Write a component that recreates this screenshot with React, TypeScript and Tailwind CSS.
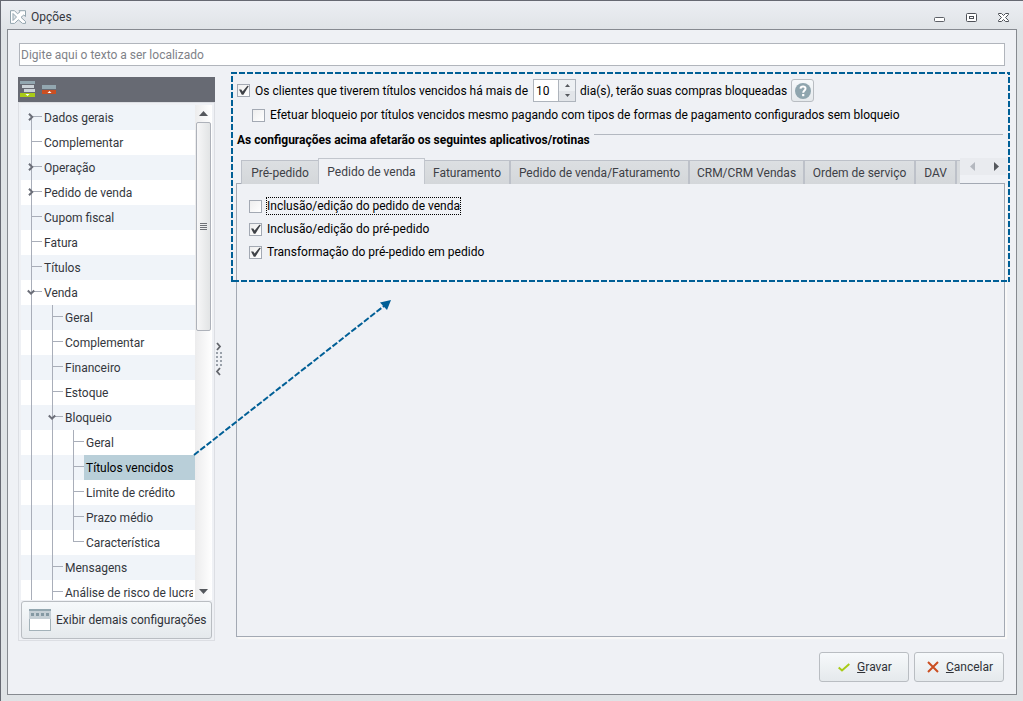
import { useState } from 'react';
import clsx from 'clsx';

type TreeRow = { id: string; label: string; depth: number; open?: boolean; last?: boolean };

const rows: TreeRow[] = [
  { id: 'dados', label: 'Dados gerais', depth: 0, open: false },
  { id: 'compl', label: 'Complementar', depth: 0 },
  { id: 'oper', label: 'Operação', depth: 0, open: false },
  { id: 'pedido', label: 'Pedido de venda', depth: 0, open: false },
  { id: 'cupom', label: 'Cupom fiscal', depth: 0 },
  { id: 'fatura', label: 'Fatura', depth: 0 },
  { id: 'titulos', label: 'Títulos', depth: 0 },
  { id: 'venda', label: 'Venda', depth: 0, open: true },
  { id: 'v-geral', label: 'Geral', depth: 1 },
  { id: 'v-compl', label: 'Complementar', depth: 1 },
  { id: 'v-fin', label: 'Financeiro', depth: 1 },
  { id: 'v-est', label: 'Estoque', depth: 1 },
  { id: 'v-bloq', label: 'Bloqueio', depth: 1, open: true },
  { id: 'b-geral', label: 'Geral', depth: 2 },
  { id: 'b-venc', label: 'Títulos vencidos', depth: 2 },
  { id: 'b-lim', label: 'Limite de crédito', depth: 2 },
  { id: 'b-prazo', label: 'Prazo médio', depth: 2 },
  { id: 'b-carac', label: 'Característica', depth: 2, last: true },
  { id: 'v-msg', label: 'Mensagens', depth: 1 },
  { id: 'v-risco', label: 'Análise de risco de lucrat', depth: 1 },
];

const tabs = [
  { name: 'Pré-pedido', width: 'w-[77px]' },
  { name: 'Pedido de venda', width: 'w-[107px]' },
  { name: 'Faturamento', width: 'w-[86px]' },
  { name: 'Pedido de venda/Faturamento', width: 'w-[179px]' },
  { name: 'CRM/CRM Vendas', width: 'w-[115px]' },
  { name: 'Ordem de serviço', width: 'w-[111px]' },
  { name: 'DAV', width: 'w-[41px]' },
];

function CheckBox({ label, defaultChecked, focused }: { label: string; defaultChecked?: boolean; focused?: boolean }) {
  return (
    <label className="flex items-center gap-[4px] whitespace-nowrap text-black">
      <span className="relative size-[13px] shrink-0">
        <input
          type="checkbox"
          defaultChecked={defaultChecked}
          className="peer block size-[13px] appearance-none border border-[#a3a9b3] bg-linear-to-br from-[#eeeeee] to-white outline-none"
        />
        <svg viewBox="0 0 13 13" className="pointer-events-none absolute inset-0 hidden size-[13px] peer-checked:block">
          <path d="M2 5.5 H4.3 L5.6 7.6 L10.4 1.8 L11.8 2 L6.4 10.8 H4.800Z" fill="#3f4247" />
        </svg>
      </span>
      <span className={clsx('border border-dotted leading-[16px]', focused ? 'border-black' : 'border-transparent')}>
        {label}
      </span>
    </label>
  );
}

function TreeItem({ row, index, selected, onSelect }: { row: TreeRow; index: number; selected: boolean; onSelect: () => void }) {
  return (
    <li role="treeitem" aria-selected={selected} className={index % 2 ? 'bg-white' : 'bg-[#f0f4f9]'}>
      <button type="button" onClick={onSelect} className="flex h-[25px] w-full items-stretch pl-[10px] text-left">
        {Array.from({ length: row.depth }, (_, i) => (
          <span key={i} className="w-[21px] shrink-0 border-l border-[#a9aeb9]" />
        ))}
        <span className="relative flex w-[11px] shrink-0 flex-col">
          <span className={clsx('h-[12px] border-b border-b-[#a9aeb9]', index > 0 && 'border-l border-l-[#a9aeb9]')} />
          <span className={clsx('flex-1', !row.last && 'border-l border-[#a9aeb9]')} />
          {row.open !== undefined && (
            <svg viewBox="0 0 8 8" className="absolute -left-[4px] top-[8px] size-[8px]">
              <path
                d={row.open ? 'M0.8 2.5 L4 5.7 L7.2 2.5' : 'M2 0.8 L5.2 4 L2 7.2'}
                fill="none"
                stroke="#6b6e78"
                strokeWidth="2"
              />
            </svg>
          )}
        </span>
        <span
          className={clsx(
            'flex-1 overflow-hidden whitespace-nowrap pl-[2px] leading-[27px]',
            selected ? 'bg-[#b9cfd9] text-black' : 'mr-[2px] text-[#34373d]'
          )}
        >
          {row.label}
        </span>
      </button>
    </li>
  );
}

function ScrollBar() {
  return (
    <div className="flex w-[17px] shrink-0 flex-col items-center bg-linear-to-r from-[#ececed] to-white">
      <button type="button" aria-label="Rolar para cima" className="flex h-[17px] w-full items-center justify-center">
        <svg viewBox="0 0 9 5" className="h-[5px] w-[9px]"><path d="M0 5 L4.500 0 L9 5Z" fill="#55585d" /></svg>
      </button>
      <div className="flex h-[209px] w-[15px] flex-col items-center justify-center gap-px rounded-[2px] border border-[#aeb2ba] bg-linear-to-r from-[#f7f7f8] to-[#e2e4e5]">
        <span className="h-px w-[7px] bg-[#6e7176]" />
        <span className="h-px w-[7px] bg-[#6e7176]" />
        <span className="h-px w-[7px] bg-[#6e7176]" />
        <span className="h-px w-[7px] bg-[#6e7176]" />
      </div>
      <button type="button" aria-label="Rolar para baixo" className="mt-auto flex h-[17px] w-full items-center justify-center">
        <svg viewBox="0 0 9 5" className="h-[5px] w-[9px]"><path d="M0 0 L4.500 5 L9 0Z" fill="#55585d" /></svg>
      </button>
    </div>
  );
}

function Sidebar() {
  const [selected, setSelected] = useState('b-venc');

  return (
    <aside className="mt-[5px] flex w-[197px] shrink-0 flex-col">
      <div className="flex h-[25px] shrink-0 items-start gap-[7px] bg-[#676a73] pl-[2px] pt-[4px]">
        <button type="button" aria-label="Expandir tudo">
          <svg viewBox="0 0 15 16" className="h-[16px] w-[15px]">
            <rect width="15" height="3" fill="#93a7b0" />
            <rect x="2" y="4" width="12" height="3" fill="#ccd3d8" />
            <rect x="4" y="8" width="11" height="3" fill="#ccd3d8" />
            <rect y="12" width="15" height="4" fill="#a8cb17" />
            <path d="M5.500 13 H9.500 L7.500 15Z" fill="#fff" />
          </svg>
        </button>
        <button type="button" aria-label="Recolher tudo">
          <svg viewBox="0 0 14 16" className="h-[16px] w-[14px]">
            <rect y="4" width="14" height="4" fill="#93a7b0" />
            <rect y="9" width="14" height="4" fill="#cb4f22" />
            <path d="M5.500 12 H9.500 L7.500 10Z" fill="#fff" />
          </svg>
        </button>
      </div>
      <div className="flex min-h-0 flex-1 flex-col border border-[#dcdee3] p-[2px] pb-px">
        <div className="flex min-h-0 flex-1">
          <ul role="tree" aria-label="Configurações" className="min-w-0 flex-1 overflow-hidden">
            {rows.map((row, i) => (
              <TreeItem key={row.id} row={row} index={i} selected={row.id === selected} onSelect={() => setSelected(row.id)} />
            ))}
          </ul>
          <ScrollBar />
        </div>
        <button
          type="button"
          className="mt-px flex h-[38px] shrink-0 items-center gap-[5px] whitespace-nowrap rounded-[3px] border border-[#b9bdc2] bg-linear-to-b from-[#f6f9fb] to-[#e5e9ec] pl-[7px] text-[#2f3238]"
        >
          <svg viewBox="0 0 22 22" className="size-[22px] shrink-0">
            <rect x="0.500" y="0.500" width="21" height="21" fill="#fff" stroke="#a3b2b9" />
            <rect width="22" height="10" fill="#c5cfd5" />
            <rect width="22" height="2" fill="#93a7b0" />
            {[2, 7, 12, 17].map((x) => (
              <rect key={x} x={x} y="4" width="3" height="3" fill="#8499a3" />
            ))}
          </svg>
          Exibir demais configurações
        </button>
      </div>
    </aside>
  );
}

function Splitter() {
  return (
    <div role="separator" className="flex w-[16px] shrink-0 justify-start pt-[270px]">
      <svg viewBox="0 0 8 34" className="h-[34px] w-[8px]">
        <path d="M2 1 L5 4.500 L2 8 M5 26 L2 29.500 L5 33" fill="none" stroke="#63666c" strokeWidth="1.8" />
        {[10, 14, 18, 22].map((y) => (
          <path key={y} d={`M1 ${y} h2 v2 h-2z M5 ${y} h2 v2 h-2z`} fill="#9aa1aa" />
        ))}
      </svg>
    </div>
  );
}

function Settings() {
  const [active, setActive] = useState('Pedido de venda');

  return (
    <section className="relative mb-[4px] mr-[6px] flex min-w-0 flex-1 flex-col pl-[5px] pr-[5px] pt-[7px]">
      <div className="flex h-[23px] items-center pl-px text-black">
        <CheckBox label="Os clientes que tiverem títulos vencidos há mais de" defaultChecked />
        <span className="ml-[4px] flex h-[23px] w-[43px] border border-[#aeb4bc] bg-white">
          <input aria-label="Dias de atraso" defaultValue="10" className="w-[24px] min-w-0 pl-[2px] outline-none" />
          <span className="flex flex-1 flex-col border-l border-[#aeb4bc] bg-[#edf0f3]">
            <button type="button" aria-label="Aumentar" className="flex flex-1 items-center justify-center">
              <svg viewBox="0 0 5 3" className="h-[3px] w-[5px]"><path d="M0 3 L2.500 0 L5 3Z" fill="#55585d" /></svg>
            </button>
            <button type="button" aria-label="Diminuir" className="flex flex-1 items-center justify-center bg-[#e2e5e9]">
              <svg viewBox="0 0 5 3" className="h-[3px] w-[5px]"><path d="M0 0 L2.500 3 L5 0Z" fill="#55585d" /></svg>
            </button>
          </span>
        </span>
        <span className="ml-[4px] whitespace-nowrap">dia(s), terão suas compras bloqueadas</span>
        <button
          type="button"
          aria-label="Ajuda"
          className="ml-[4px] flex size-[23px] shrink-0 items-center justify-center rounded-[3px] border border-[#b9bdc2] bg-linear-to-b from-[#f6f9fb] to-[#e5e9ec]"
        >
          <svg viewBox="0 0 16 16" className="size-[16px]">
            <circle cx="8" cy="8" r="8" fill="#8fa5ae" />
            <path d="M5.500 5.600 C5.700 2.600 10.700 2.700 10.500 5.700 C10.400 7.400 8.200 7.500 8.200 9.700" fill="none" stroke="#fff" strokeWidth="2" />
            <rect x="7.100" y="11" width="2.200" height="2.200" fill="#fff" />
          </svg>
        </button>
      </div>
      <div className="flex h-[26px] items-center pl-[16px]">
        <CheckBox label="Efetuar bloqueio por títulos vencidos mesmo pagando com tipos de formas de pagamento configurados sem bloqueio" />
      </div>
      <div className="flex h-[24px] items-center gap-[4px] pl-px pr-[2px]">
        <h2 className="whitespace-nowrap font-bold text-black">As configurações acima afetarão os seguintes aplicativos/rotinas</h2>
        <span className="mb-[12px] h-px flex-1 bg-[#b3b8c0]" />
      </div>

      <div className="relative z-10 -mb-px mt-[6px] flex h-[26px] pl-[5px]">
        <div role="tablist" className="flex min-w-0 items-end">
          {tabs.map((tab) => (
            <button
              key={tab.name}
              type="button"
              role="tab"
              aria-selected={tab.name === active}
              onClick={() => setActive(tab.name)}
              className={clsx(
                'shrink-0 whitespace-nowrap border-t text-center text-[#3d4046]',
                tab.width,
                tab.name === active
                  ? 'h-[26px] border-x border-[#c2c6cd] bg-[#eff1f5]'
                  : 'h-[24px] border-[#bdc1c9] bg-linear-to-b from-[#dcdfe2] to-[#d4d7da]',
                tab.name !== active && (tab.name === tabs[0].name ? 'border-l' : 'border-r-2')
              )}
            >
              {tab.name}
            </button>
          ))}
          <span className="h-[24px] w-[3px] border-t border-[#bdc1c9] bg-[#d8dbde]" />
        </div>
        <div className="-mr-[2px] ml-auto flex h-[17px] w-[47px] items-center justify-between bg-[#e9ebef] pl-[10px] pr-[8px]">
          <button type="button" aria-label="Abas anteriores">
            <svg viewBox="0 0 5 9" className="h-[9px] w-[5px]"><path d="M5 0 L0 4.500 L5 9Z" fill="#b4b8bf" /></svg>
          </button>
          <button type="button" aria-label="Próximas abas">
            <svg viewBox="0 0 5 9" className="h-[9px] w-[5px]"><path d="M0 0 L5 4.500 L0 9Z" fill="#55585d" /></svg>
          </button>
        </div>
      </div>
      <div role="tabpanel" className="flex flex-1 flex-col gap-[5px] border border-[#a3a9b3] pl-[12px] pt-[13px] shadow-[2px_2px_1px_#f9f8f7]">
        <CheckBox label="Inclusão/edição do pedido de venda" focused />
        <CheckBox label="Inclusão/edição do pré-pedido" defaultChecked />
        <CheckBox label="Transformação do pré-pedido em pedido" defaultChecked />
      </div>

      {/* Highlight around the options */}
      <svg className="pointer-events-none absolute left-0 top-0 z-20 h-[210px] w-full">
        <rect width="100%" height="100%" fill="none" stroke="#005f96" strokeWidth="4" strokeDasharray="6 2" />
      </svg>
    </section>
  );
}

const footerButton =
  'flex h-[30px] w-[90px] items-center justify-center gap-[7px] rounded-[3px] border border-[#b9bdc2] bg-linear-to-b from-[#f6f9fb] to-[#e5e9ec] pl-[2px] text-[#2f3238]';

export default function App() {
  return (
    <div className="flex h-screen min-h-[640px] flex-col border-l border-t border-[#666972] bg-linear-to-b from-[#eceef3] to-[#dfe3e6] to-[30px] px-[6px] pb-[6px] font-['Roboto','Noto_Sans',sans-serif] text-[12px] leading-[16px]">
      <header className="flex h-[28px] shrink-0 items-center pl-[3px] pr-[8px] pt-[4px]">
        <svg viewBox="0 0 16 14" className="h-[14px] w-[16px]">
          <path
            d="M0.500 0.700 H4.500 L7.500 3.800 L10 1.800 L9 0.700 H15.500 V6.500 L13.800 5 L11 7.300 L15.500 11.500 V13.400 H12.500 L8.300 9.800 L4.500 13.400 H0.500Z"
            fill="#fff"
            stroke="#93a5ae"
          />
          <path d="M3 3.500 L6.500 7 L3 10.500Z" fill="#e3e8ec" stroke="#93a5ae" />
        </svg>
        <h1 className="ml-[5px] text-[#34373d]">Opções</h1>
        <div className="ml-auto flex items-center gap-[21px]">
          <button type="button" aria-label="Minimizar">
            <svg viewBox="0 0 11 11" className="size-[11px]"><rect x="0.500" y="5.500" width="10" height="4" rx="1" fill="#fff" stroke="#5d6067" /></svg>
          </button>
          <button type="button" aria-label="Maximizar">
            <svg viewBox="0 0 11 11" className="size-[11px]">
              <rect x="0.500" y="1.500" width="10" height="8" rx="1" fill="#fff" stroke="#4d5057" />
              <rect x="3.500" y="4.500" width="4" height="2" fill="#fff" stroke="#4d5057" />
            </svg>
          </button>
          <button type="button" aria-label="Fechar">
            <svg viewBox="0 0 11 11" className="size-[11px]">
              <path
                d="M0.500 1.500 H3.500 L5.500 3.500 L7.500 1.500 H10.500 V2.500 L7.500 5.500 L10.500 8.500 V9.500 H7.500 L5.500 7.500 L3.500 9.500 H0.500 V8.500 L3.500 5.500 L0.500 2.500Z"
                fill="#fff"
                stroke="#4d5057"
              />
            </svg>
          </button>
        </div>
      </header>

      <main className="flex min-h-0 flex-1 flex-col border border-[#868a90] bg-[#eff1f5]">
        <div className="flex pl-[11px] pr-[11px] pt-[13px]">
          <input
            type="search"
            aria-label="Localizar"
            placeholder="Digite aqui o texto a ser localizado"
            className="h-[23px] flex-1 border border-[#b1b5bc] bg-white pl-px text-[#34373d] outline-none placeholder:text-[#808288]"
          />
        </div>

        <div className="relative mt-[6px] flex min-h-0 flex-1 pl-[10px]">
          <Sidebar />
          <Splitter />
          <Settings />

          {/* Arrow from the selected item to its options */}
          <svg viewBox="0 0 202 160" className="pointer-events-none absolute left-[184px] top-[226px] z-20 h-[160px] w-[202px]">
            <path d="M2 157 L192 8" stroke="#005f96" strokeWidth="2" strokeDasharray="6 2" />
            <path d="M199 2 L188 4.500 L195 12Z" fill="#005f96" />
          </svg>
        </div>

        <footer className="flex shrink-0 justify-end gap-[5px] pb-[12px] pr-[12px] pt-[11px]">
          <button type="button" className={footerButton}>
            <svg viewBox="0 0 12 9" className="h-[9px] w-[12px]">
              <path d="M0.700 4.500 L4 7.500 L11.300 1" fill="none" stroke="#a8cb17" strokeWidth="2" />
            </svg>
            <span><u>G</u>ravar</span>
          </button>
          <button type="button" className={footerButton}>
            <svg viewBox="0 0 12 12" className="size-[12px]">
              <path d="M1 1 L11 11 M11 1 L1 11" stroke="#cb4f22" strokeWidth="2" />
            </svg>
            <span><u>C</u>ancelar</span>
          </button>
        </footer>
      </main>
    </div>
  );
}
